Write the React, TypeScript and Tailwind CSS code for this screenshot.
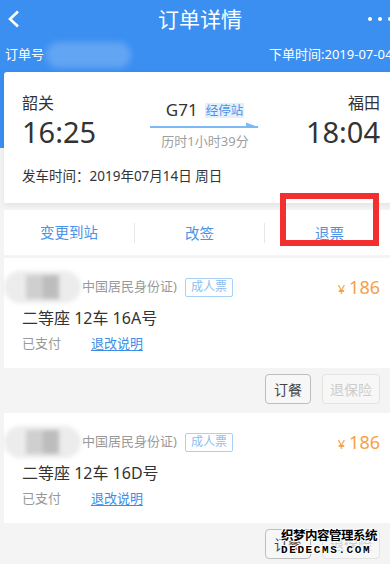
import React from 'react';

const FONT = { fontFamily: '"Noto Sans", "Noto Sans CJK SC", sans-serif' };

function Blur({ className }: { className: string }) {
  return <div className={className} />;
}

function NameBlob() {
  return (
    <div className="w-[77px] h-[32px] shrink-0 -ml-[18px] mr-[1px] relative blur-[2px]">
      <div className="flex h-full items-center rounded-full bg-[#ececec] px-[22px]">
        <div className="h-[24px] w-[20px] bg-[#cfcfcf]" />
        <div className="h-[24px] w-[20px] bg-[#bdbdbd]" />
      </div>
    </div>
  );
}

function Passenger({ seat }: { seat: string }) {
  return (
    <>
      <div className="ml-1 w-[390px] h-[110px] bg-white pl-[18px] pr-[14px] pt-[17px]">
        <div className="flex h-[24px] items-center">
          <NameBlob />
          <span className="text-[13px] text-[#999]">中国居民身份证)</span>
          <span className="ml-[8px] h-[19px] px-[5px] flex items-center rounded-[2px] border border-[#a9d0f6] text-[12px] text-[#8dbdee]">
            成人票
          </span>
          <span className="ml-auto flex items-baseline text-[#f7a145]">
            <span className="text-[13px] mr-[4px]">¥</span>
            <span className="text-[18px]">186</span>
          </span>
        </div>
        <div className="mt-[8px] h-[22px] leading-[22px] text-[16px] text-[#333]">{seat}</div>
        <div className="mt-[6px] flex h-[18px] items-center text-[13px]">
          <span className="text-[#999] w-[69px]">已支付</span>
          <span className="text-[#3b8ee8] underline underline-offset-2">退改说明</span>
        </div>
      </div>
      <div className="ml-1 w-[390px] h-[45px] flex justify-end items-start pt-[6px] pr-[14px] gap-[11px]">
        <button className="h-[30px] w-[46px] rounded-[4px] border border-[#bdbdbd] bg-[#f7f7f7] text-[14px] text-[#444]">订餐</button>
        <button className="h-[30px] w-[58px] rounded-[4px] border border-[#e3e3e3] bg-[#f7f7f7] text-[14px] text-[#cccccc]">退保险</button>
      </div>
    </>
  );
}

export default function App() {
  return (
    <div
      className="relative w-[390px] h-[564px] overflow-hidden bg-[linear-gradient(to_bottom,#3b8ff1_148px,#f4f4f4_148px)]"
      style={FONT}
    >
      {/* Top bar */}
      <div className="flex h-[38px] items-center px-[7px] text-white">
        <svg width="13" height="18" viewBox="0 0 13 18" className="shrink-0">
          <path d="M11 1.5 L3 9 L11 16.5" fill="none" stroke="white" strokeWidth="2.6" />
        </svg>
        <div className="flex-1 text-center text-[21px] leading-none pl-[12px]">订单详情</div>
        <div className="flex gap-[6px] mr-[-9px]">
          <span className="h-[4px] w-[4px] rounded-full bg-white" />
          <span className="h-[4px] w-[4px] rounded-full bg-white" />
          <span className="h-[4px] w-[4px] rounded-full bg-white" />
        </div>
      </div>

      {/* Order number */}
      <div className="flex h-[34px] items-center text-white text-[13px] whitespace-nowrap">
        <div className="w-[264px] shrink-0 flex items-center pl-[5px]">
          <span>订单号</span>
          <Blur className="ml-[2px] h-[26px] w-[85px] rounded-full bg-white/20 blur-[3px]" />
        </div>
        <span className="shrink-0 pl-[5px]">下单时间:2019-07-04 10:21</span>
      </div>

      {/* Train card */}
      <div className="ml-1 w-[390px] h-[131px] bg-white pl-[18px] pr-[14px] pt-[20px] shadow-[0_2px_6px_rgba(0,0,0,0.08)] rounded-t-[3px]">
        <div className="flex justify-between text-[#333]">
          <div className="w-[90px]">
            <div className="text-[16px] leading-[22px]">韶关</div>
            <div className="text-[29px] leading-[36px]">16:25</div>
          </div>
          <div className="w-[110px] flex flex-col items-center mt-[8px] ml-[8px]">
            <div className="flex items-center gap-[7px] h-[20px]">
              <span className="text-[17px]">G71</span>
              <span className="bg-[#e3effc] px-[1px] text-[12.5px] leading-[15px] text-[#4a93e6]">经停站</span>
            </div>
            <svg width="110" height="8" viewBox="0 0 110 8" className="mt-[1px]">
              <path d="M0 6 H108" stroke="#7db9f5" strokeWidth="2" />
              <path d="M96 1.5 L109 6.5 L96 6.5 Z" fill="#7db9f5" />
            </svg>
            <span className="mt-[3px] text-[13px] text-[#a0a0a0]">历时1小时39分</span>
          </div>
          <div className="w-[90px] text-right">
            <div className="text-[16px] leading-[22px]">福田</div>
            <div className="text-[29px] leading-[36px]">18:04</div>
          </div>
        </div>
        <div className="mt-[15px] text-[13.5px] leading-[18px] text-[#333]">发车时间：2019年07月14日 周日</div>
      </div>

      {/* Actions */}
      <div className="ml-1 mt-[7px] w-[390px] h-[45px] bg-white grid grid-cols-3 items-center text-[14.5px] text-[#4a93e6]">
        <div className="text-center">变更到站</div>
        <div className="text-center border-l border-[#e6e6e6] h-[20px] leading-[20px]">改签</div>
        <div className="text-center border-l border-[#e6e6e6] h-[20px] leading-[20px]">退票</div>
      </div>

      <div className="h-[3px]" />
      <Passenger seat="二等座 12车 16A号" />
      <Passenger seat="二等座 12车 16D号" />

      {/* Annotation box */}
      <div className="absolute left-[280px] top-[193px] w-[99px] h-[53px] border-[6px] border-[#f2302f]" />

      {/* Watermark */}
      <div className="absolute left-[281px] top-[529px] w-[98px] text-black font-bold leading-none [text-shadow:1px_0_#fff,-1px_0_#fff,0_1px_#fff,0_-1px_#fff,1px_1px_#fff,-1px_-1px_#fff]">
        <div className="text-[12.5px] tracking-[-0.5px]" style={{ fontFamily: '"Noto Sans CJK SC", sans-serif' }}>织梦内容管理系统</div>
        <div className="mt-[3px] text-[11px] tracking-[1.6px]" style={{ fontFamily: '"Liberation Mono", monospace' }}>DEDECMS.COM</div>
      </div>
    </div>
  );
}
